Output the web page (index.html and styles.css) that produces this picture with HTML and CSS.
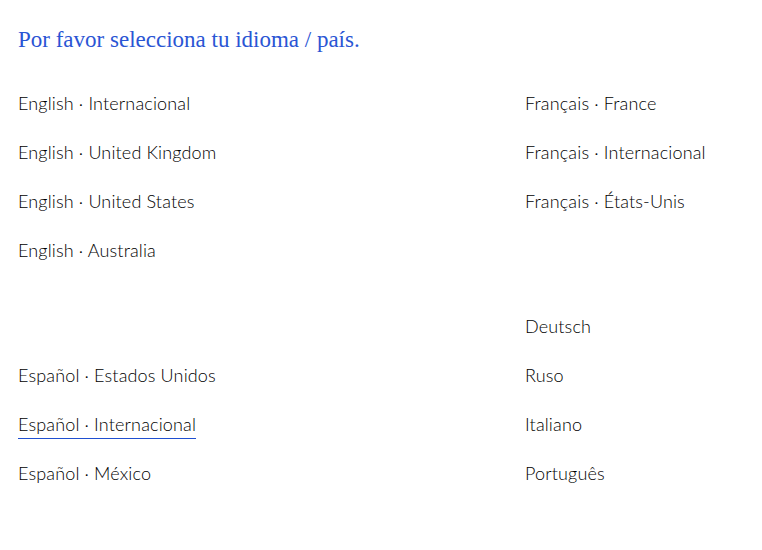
FILE: index.html
```html
<!DOCTYPE html>
<html lang="es">
<head>
<meta charset="utf-8">
<link rel="stylesheet" href="styles.css">
</head>
<body>
<main class="page">
  <h1 class="title">Por favor selecciona tu idioma / país.</h1>
  <div class="grid">
    <ul class="list">
      <li><a href="#">English · Internacional</a></li>
      <li><a href="#">English · United Kingdom</a></li>
      <li><a href="#">English · United States</a></li>
      <li><a href="#">English · Australia</a></li>
    </ul>
    <ul class="list">
      <li><a href="#">Français · France</a></li>
      <li><a href="#">Français · Internacional</a></li>
      <li><a href="#">Français · États-Unis</a></li>
    </ul>
    <ul class="list">
      <li class="spacer"></li>
      <li><a href="#">Español · Estados Unidos</a></li>
      <li><a href="#" class="active">Español · Internacional</a></li>
      <li><a href="#">Español · México</a></li>
    </ul>
    <ul class="list">
      <li><a href="#">Deutsch</a></li>
      <li><a href="#">Ruso</a></li>
      <li><a href="#">Italiano</a></li>
      <li><a href="#">Português</a></li>
    </ul>
  </div>
</main>
</body>
</html>
```
FILE: styles.css
```css
html, body { margin: 0; padding: 0; background: #fff; }
.page { padding: 26px 18px 0 18px; }
.title {
  margin: 0;
  font-family: "Liberation Serif", serif;
  font-weight: normal;
  font-size: 23px;
  line-height: 28px;
  color: #2a55d4;
}
.grid {
  display: grid;
  grid-template-columns: 507px 1fr;
  row-gap: 27px;
  margin-top: 37px;
}
.list { list-style: none; margin: 0; padding: 0; display: flex; flex-direction: column; }
.list li { height: 49px; font-family: Lato, sans-serif; font-weight: 300; font-size: 18px; line-height: 24px; letter-spacing: 0.15px; }
.list a { color: #000; text-decoration: none; padding-bottom: 3px; }
.list a.active { border-bottom: 1px solid #1f4fd0; }
```
